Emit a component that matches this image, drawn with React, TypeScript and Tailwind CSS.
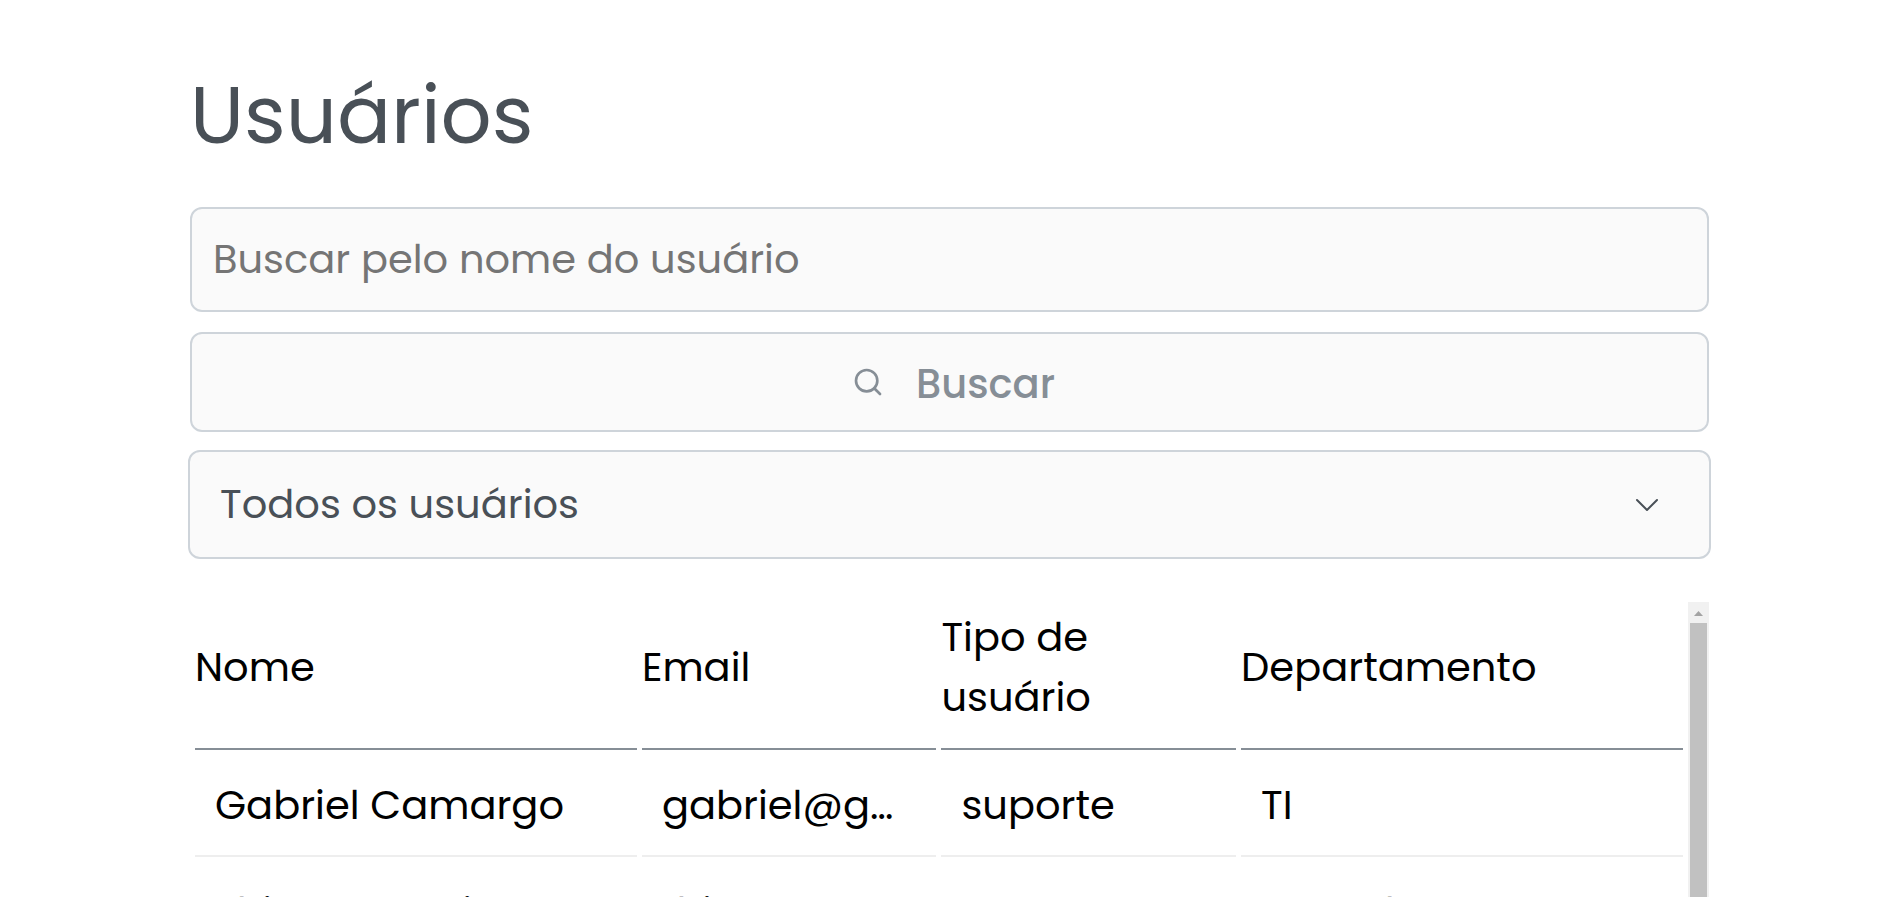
import { ChevronDown, Search } from "lucide-react";

const columns = [
  { label: "Nome", width: "w-[30%]" },
  { label: "Email", width: "w-[20%]" },
  { label: "Tipo de usuário", width: "w-[20%]" },
  { label: "Departamento", width: "w-[30%]" },
];

const users = [
  ["Gabriel Camargo", "gabriel@gmail.com", "suporte", "TI"],
  ["Thiago Moreira", "thiago@gmail.com", "suporte", "Contab."],
];

const box = "border-2 border-[#ced4da] bg-[#fafafa] rounded-xl";

function SearchForm() {
  return (
    <form className="flex flex-col" onSubmit={(e) => e.preventDefault()}>
      <input
        type="text"
        aria-label="Buscar pelo nome do usuário"
        placeholder="Buscar pelo nome do usuário"
        className={`${box} h-[105px] w-full px-[21px] pb-0.5 text-[#495057] outline-none placeholder:text-[#757575]`}
      />
      <button
        type="submit"
        className={`${box} mt-5 flex h-[100px] w-full items-center justify-center gap-8 pl-2 font-medium text-[#868e96]`}
      >
        <Search className="size-8" strokeWidth={2} />
        <span className="pt-1">Buscar</span>
      </button>
    </form>
  );
}

function UserFilter() {
  return (
    <div className="relative -mx-0.5 mt-[18px]">
      <select
        aria-label="Filtrar usuários"
        className={`${box} h-[109px] w-full appearance-none px-[30px] pb-0.5 text-[#495057] outline-none`}
      >
        <option>Todos os usuários</option>
      </select>
      <ChevronDown
        className="pointer-events-none absolute inset-y-0 right-11 my-auto size-10 text-[#495057]"
        strokeWidth={1.2}
      />
    </div>
  );
}

function UserTable() {
  return (
    <div className="min-w-0 flex-1">
      <table className="w-full table-fixed border-separate border-spacing-[5px] text-left text-black">
        <thead>
          <tr>
            {columns.map((c) => (
              <th
                key={c.label}
                scope="col"
                className={`${c.width} border-b-2 border-[#868e96] pb-[21px] align-middle font-normal`}
              >
                {c.label}
              </th>
            ))}
          </tr>
        </thead>
        <tbody>
          {users.map((row) => (
            <tr key={row[0]}>
              {row.map((cell) => (
                <td key={cell} className="truncate border-b-2 border-[#eeeeee] p-5">
                  {cell}
                </td>
              ))}
            </tr>
          ))}
        </tbody>
      </table>
    </div>
  );
}

function ScrollTrack() {
  return (
    <div aria-hidden="true" className="flex w-[21px] shrink-0 flex-col bg-[#f1f1f1] px-0.5">
      <div className="flex h-[21px] shrink-0 items-center justify-center">
        <svg width="9" height="5" viewBox="0 0 9 5" className="mt-0.5 fill-[#a3a3a3]">
          <path d="M4.5 0L9 5H0Z" />
        </svg>
      </div>
      <div className="flex-1 bg-[#c1c1c1]" />
    </div>
  );
}

export default function App() {
  return (
    <main className="flex h-screen flex-col overflow-hidden bg-white pt-[55px] pr-[188px] pl-[190px] font-[Poppins,Inter,sans-serif] text-[40px] leading-[60px]">
      <h1 className="mb-8 text-[80px] leading-[120px] text-[#495057]">Usuários</h1>
      <SearchForm />
      <UserFilter />
      <section aria-label="Lista de usuários" className="mt-[43px] flex min-h-0 flex-1 overflow-hidden">
        <UserTable />
        <ScrollTrack />
      </section>
    </main>
  );
}
